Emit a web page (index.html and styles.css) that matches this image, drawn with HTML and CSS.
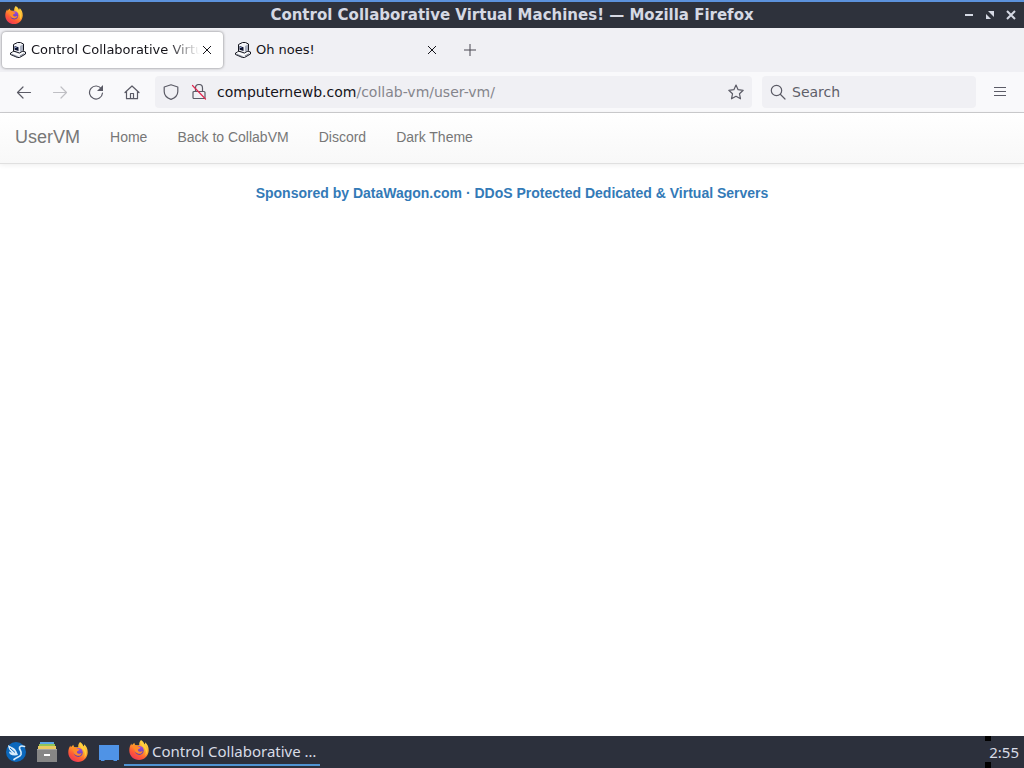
FILE: index.html
```html
<!DOCTYPE html>
<html lang="en">
<head>
<meta charset="utf-8">
<title>Control Collaborative Virtual Machines!</title>
<link rel="stylesheet" href="styles.css">
</head>
<body>
<svg class="defs" aria-hidden="true">
  <defs>
    <linearGradient id="flame" x1="0.8" y1="0" x2="0.2" y2="1">
      <stop offset="0" stop-color="#ffe14a"/><stop offset=".4" stop-color="#ffa52b"/><stop offset=".7" stop-color="#ff5a35"/><stop offset="1" stop-color="#e8315f"/>
    </linearGradient>
    <linearGradient id="globe" x1="0" y1="0" x2="0" y2="1"><stop offset="0" stop-color="#a04be0"/><stop offset="1" stop-color="#5a3fb0"/></linearGradient>
    <symbol id="firefox" viewBox="0 0 20 20">
      <path fill="url(#flame)" d="M12 0c2 1.300 3 2.700 3.400 4.200.7-.4.900-1.200.8-2C18.500 4.200 19.800 7 19.700 10.500 19.500 16 15.200 20 10 20S.5 16 .3 10.700C.2 8 1 5.500 2.500 3.500c0 .7.100 1.300.4 1.800C3.600 4.500 4.400 3.600 5.400 2.800c0 1 .4 2 1.300 2.500h3.600C10 3.400 10.500 1.400 12 0z"/>
      <circle cx="10.300" cy="10.400" r="4.500" fill="url(#globe)"/>
      <path fill="#ff8a28" d="M3.500 6.200c2-1.600 4.700-1.200 6 .6l2 .4c-.3 1.200-1.500 1.500-2.300 2-.7 1 .2 2.500 1.800 2.500 1.300 0 1.800-.8 2.800-.5-.6 1.900-2.400 2.900-4.300 2.500-2.800-.5-4.100-2.500-4.300-4.700z"/>
      <path fill="#ffd13c" d="M12.300 1c1.700 2 2.200 3.500 4.400 5.700 2 2.700 1.800 6.500-.4 9.200 1-3 .8-6-1-7.800-1.500-1.500-4-3.800-3-7.100z"/>
    </symbol>
    <symbol id="pc" viewBox="0 0 16 16">
      <path fill="#e4e6ec" stroke="#14161f" d="M3.500 9.500.5 11v1.500l7 3h2l6-3.500v-2l-3-1z"/>
      <path fill="#fff" d="m1.500 11 2-1 5 2 4-2 2 .5-6 3.200z"/>
      <path fill="#f2f3f7" stroke="#14161f" d="M3.500 2.500 7.500.5h3l3 1.500v6.500L9.500 11l-6-2z"/>
      <path fill="#aab0c0" d="m10 4 3-1.500v5.700L10 10z"/>
      <path fill="#0c1330" d="m4.500 4 4 1.200V9l-4-1.300z"/>
      <path fill="#8fa2d8" d="M5 5h1.500v1H5z"/>
      <path stroke="#555b6c" d="m2 12.500 6 2.500M10 14l4-2.200" stroke-width=".7"/>
    </symbol>
    <symbol id="close" viewBox="0 0 10 10"><path d="m1 1 8 8M9 1 1 9" fill="none" stroke="currentColor"/></symbol>
  </defs>
</svg>

<div class="desktop">
  <header class="titlebar">
    <svg class="app-icon"><use href="#firefox"/></svg>
    <h1>Control Collaborative Virtual Machines! — Mozilla Firefox</h1>
    <div class="window-buttons">
      <button aria-label="Minimize"><svg viewBox="0 0 10 10"><path d="M1 5h8" stroke="currentColor" stroke-width="2"/></svg></button>
      <button aria-label="Restore"><svg viewBox="0 0 10 10"><path fill="currentColor" d="M3 1h6v6L7 5 5 3zM1 4l2 2 2 2 1 1H1z"/></svg></button>
      <button aria-label="Close"><svg viewBox="0 0 10 10"><path d="m1 1 8 8M9 1 1 9" stroke="currentColor" stroke-width="2"/></svg></button>
    </div>
  </header>

  <div class="tabs">
    <div class="tab active">
      <svg class="favicon"><use href="#pc"/></svg>
      <span class="tab-label">Control Collaborative Virtual Machines!</span>
      <button class="tab-close" aria-label="Close tab"><svg><use href="#close"/></svg></button>
    </div>
    <div class="tab">
      <svg class="favicon"><use href="#pc"/></svg>
      <span class="tab-label">Oh noes!</span>
      <button class="tab-close" aria-label="Close tab"><svg><use href="#close"/></svg></button>
    </div>
    <button class="new-tab" aria-label="New tab"><svg viewBox="0 0 12 12"><path d="M6 0v12M0 6h12" stroke="currentColor"/></svg></button>
  </div>

  <div class="toolbar">
    <div class="nav-buttons">
      <button aria-label="Back"><svg class="icon" viewBox="0 0 16 16"><path d="M14.500 8.500h-13M7 3 1.500 8.500 7 14"/></svg></button>
      <button aria-label="Forward" disabled><svg class="icon" viewBox="0 0 16 16"><path d="M1.500 8.500h13M9 3l5.500 5.500L9 14"/></svg></button>
      <button aria-label="Reload"><svg class="icon" viewBox="0 0 16 16"><path d="M13.500 5A6.500 6.500 0 1 0 14.500 9"/><path class="solid" d="M15 1v6H9z"/></svg></button>
      <button aria-label="Home"><svg class="icon" viewBox="0 0 16 16"><path d="M1 8.500 8 2l7 6.500M2.500 7.500v7.200h11V7.500M6.500 14.500v-5h3v5"/></svg></button>
    </div>
    <div class="address">
      <svg class="icon" viewBox="0 0 16 16"><path d="M8 .8 14.800 3v4.500c0 3.600-3 6.500-6.800 7.900C4.200 14 1.200 11.100 1.200 7.500V3z"/></svg>
      <svg class="icon" viewBox="0 0 16 16"><path d="M4.500 7V4a3.500 3.500 0 0 1 7 0v3M3 7.500h10a1 1 0 0 1 1 1v5a1 1 0 0 1-1 1H3a1 1 0 0 1-1-1v-5a1 1 0 0 1 1-1z"/><path class="slash" d="m1.500 1.500 13 13.500"/></svg>
      <a class="url" href="#">computernewb.com<span>/collab-vm/user-vm/</span></a>
      <button aria-label="Bookmark"><svg class="icon" viewBox="0 0 16 16"><path d="m8 1 2.100 4.700 5.100.6-3.700 3.500 1 5L8 12.300l-4.500 2.500 1-5L.8 6.300l5.100-.6z"/></svg></button>
    </div>
    <label class="search">
      <svg class="icon" viewBox="0 0 16 16"><circle cx="6.500" cy="6.500" r="5.200"/><path d="m10.500 10.500 4.500 4.500"/></svg>
      <input type="text" placeholder="Search" aria-label="Search">
    </label>
    <button class="menu" aria-label="Menu"><svg viewBox="0 0 12 12"><path d="M0 1.500h12M0 5.500h12M0 9.500h12" stroke="currentColor"/></svg></button>
  </div>

  <nav class="navbar">
    <a class="brand" href="#">UserVM</a>
    <a href="#">Home</a>
    <a href="#">Back to CollabVM</a>
    <a href="#">Discord</a>
    <a href="#">Dark Theme</a>
  </nav>

  <main>
    <a class="sponsor" href="#">Sponsored by DataWagon.com · DDoS Protected Dedicated &amp; Virtual Servers</a>
  </main>

  <footer class="taskbar">
    <button class="launcher" aria-label="Applications"><svg viewBox="0 0 20 20"><circle cx="10" cy="10" r="10" fill="#0b68bd"/><path fill="none" stroke="#d8ecfb" stroke-width="1.700" stroke-linecap="round" stroke-linejoin="round" d="M18.500 4.500c-3-1-5.500-.5-5 2 .3 2 2.500 3 1.500 6-.9 2.500-4 2.500-7 5"/><path fill="#d8ecfb" d="M2 3c3 2 7 2.500 8.500 6.500L12 13l-3 .5C5 13.500 3 12 3 9.500l3 1.300C3.500 8.500 2.200 6 2 3z"/><path fill="none" stroke="#0b68bd" d="m4 6 5 4.500"/></svg></button>
    <button class="launcher" aria-label="Files"><svg viewBox="0 0 20 20"><path fill="#5aa6e6" d="M3 0h14v3H3z"/><path fill="#8fc45a" d="M2 2h16v3H2z"/><path fill="#e9ca62" d="M1 4h18v4H1z"/><path fill="#868686" d="M0 7h20v13H0z"/><path fill="#a3a3a3" d="M0 7h20v1H0z"/><path fill="#fff" d="M7 12h6v2H7z"/></svg></button>
    <button class="launcher" aria-label="Firefox"><svg><use href="#firefox"/></svg></button>
    <button class="launcher" aria-label="Show desktop"><svg viewBox="0 0 20 20"><path fill="#4f93e6" d="M0 3h20v15h-2v1h-3l-1-1H6l-1 1H2v-1H0z"/></svg></button>
    <button class="task"><svg><use href="#firefox"/></svg><span>Control Collaborative …</span></button>
    <time class="clock">2:55</time>
  </footer>
</div>
</body>
</html>
```
FILE: styles.css
```css
* { box-sizing: border-box; }
body { margin: 0; background: #fff; color: #15141a; font: 14px/20px "DejaVu Sans", sans-serif; }
button { display: grid; place-items: center; padding: 0; border: 0; background: none; color: inherit; font: inherit; }
a { text-decoration: none; }
svg { display: block; flex: none; }
.defs { position: absolute; width: 0; height: 0; }
.desktop { display: flex; flex-direction: column; min-height: 100vh; }

.titlebar { display: grid; grid-template-columns: 60px 1fr 60px; align-items: center; height: 28px; border-top: 2px solid #5c92dc; background: #2e323c; color: #d5d9e4; }
.titlebar h1 { margin: 0; text-align: center; font-size: 15px; line-height: 20px; white-space: nowrap; }
.app-icon { width: 18px; height: 18px; margin-left: 5px; }
.window-buttons { display: flex; justify-content: space-between; padding-right: 8px; }
.window-buttons svg { width: 10px; height: 10px; }

.tabs { display: flex; align-items: center; height: 44px; padding: 0 2px; gap: 4px; background: #f0f0f4; }
.tab { display: flex; align-items: center; width: 221px; height: 36px; padding: 0 9px 0 8px; border-radius: 4px; }
.tab.active { background: #fff; box-shadow: 0 0 3px rgba(0, 0, 0, .5); }
.favicon { width: 16px; height: 16px; margin-right: 5px; }
.tab-label { flex: 1; overflow: hidden; font-size: 13px; white-space: nowrap; }
.active .tab-label { -webkit-mask-image: linear-gradient(to left, transparent, #000 32px); mask-image: linear-gradient(to left, transparent, #000 32px); }
.tab-close { width: 14px; height: 20px; }
.tab-close svg { width: 10px; height: 10px; }
.new-tab { width: 36px; height: 36px; color: #4a4953; }
.new-tab svg, .menu svg { width: 12px; height: 12px; }

.toolbar { display: flex; align-items: center; height: 41px; padding: 0 6px; border-bottom: 1px solid #cccccf; background: #f9f9fb; color: #5b5b66; }
.nav-buttons { display: flex; }
.nav-buttons button { width: 36px; height: 32px; }
.nav-buttons button:disabled { color: #bfbfc4; }
.icon { width: 16px; height: 16px; fill: none; stroke: currentColor; stroke-width: 1.2; stroke-linejoin: round; stroke-linecap: round; }
.icon .solid { fill: currentColor; stroke: none; }
.icon .slash { stroke: #e22850; }
.address { display: flex; flex: 1; align-items: center; gap: 12px; height: 32px; margin-left: 5px; padding: 0 8px; border-radius: 4px; background: #f0f0f4; }
.url { flex: 1; margin-left: -2px; color: #15141a; }
.url span { color: #85858c; }
.search { display: flex; align-items: center; gap: 6px; width: 214px; height: 32px; margin-left: 10px; padding: 0 8px; border-radius: 4px; background: #f0f0f4; }
.search input { min-width: 0; flex: 1; padding: 0; border: 0; outline: 0; background: none; color: inherit; font: inherit; }
.search input::placeholder { color: #5f5f69; opacity: 1; }
.menu { width: 36px; height: 32px; margin-left: 6px; }

.navbar { display: flex; align-items: center; gap: 30px; height: 51px; padding: 0 15px 2px; border-bottom: 1px solid #e0e0e0; background: linear-gradient(#fff, #f8f8f8); box-shadow: 0 1px 5px rgba(0, 0, 0, .07); font: 14px/20px "Liberation Sans", Arial, sans-serif; }
.navbar a { color: #777; }
.navbar .brand { font-size: 18px; }
main { flex: 1; padding-top: 19px; text-align: center; }
.sponsor { color: #337ab7; font: bold 14px/20px "Liberation Sans", Arial, sans-serif; }

.taskbar { display: flex; height: 32px; background: #2c303c; color: #d8dce6; font: 15px/20px "Noto Sans", sans-serif; }
.launcher { width: 31px; height: 32px; }
.launcher svg { width: 20px; height: 20px; }
.task { display: flex; align-items: center; gap: 3px; width: 196px; height: 30px; padding-left: 5px; border-bottom: 2px solid #4f93d2; white-space: nowrap; }
.task svg { width: 20px; height: 20px; }
.task span { padding-top: 2px; }
.clock { margin-left: auto; padding: 6px 5px 6px 4px; background: linear-gradient(#000, #000) 0 0 / 6px 5px no-repeat, linear-gradient(#000, #000) 0 100% / 6px 6px no-repeat; }
```
